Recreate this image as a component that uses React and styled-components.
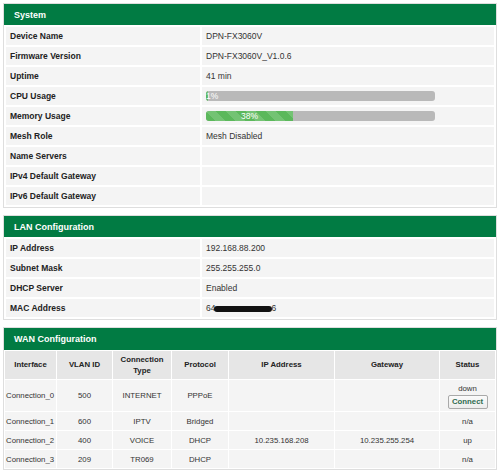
import React from "react";
import styled, { createGlobalStyle } from "styled-components";

const GlobalStyle = createGlobalStyle`
  html, body { margin: 0; padding: 0; background: #fff; }
  body { font-family: "Liberation Sans", Arial, sans-serif; }
`;

const Page = styled.div`
  padding: 3px 3px 0 3px;
  display: flex;
  flex-direction: column;
  gap: 7px;
`;

const Panel = styled.section`
  border: 1px solid #dedede;
  background: #fff;
`;

const Header = styled.div`
  background: #017b43;
  color: #fff;
  font-weight: bold;
  font-size: 9px;
  height: ${(p) => p.$h || 21}px;
  display: flex;
  align-items: center;
  padding-left: 10px;
`;

const InfoTable = styled.table`
  width: 100%;
  border-collapse: separate;
  border-spacing: 2px;
  font-size: 8.5px;
`;

const Label = styled.td`
  width: 186px;
  height: 18px;
  padding: 0 4px;
  background: #f4f4f4;
  font-weight: bold;
  color: #222;
`;

const Value = styled.td`
  height: 18px;
  padding: 0 4px;
  background: #f4f4f4;
  color: #333;
`;

const Bar = styled.div`
  position: relative;
  width: 229px;
  height: 10px;
  border-radius: 3px;
  background: #b9b9b9;
  overflow: hidden;
  display: flex;
`;

const Fill = styled.div`
  height: 100%;
  background-color: #5cb85c;
  background-image: linear-gradient(
    45deg,
    rgba(255, 255, 255, 0.15) 25%,
    transparent 25%,
    transparent 50%,
    rgba(255, 255, 255, 0.15) 50%,
    rgba(255, 255, 255, 0.15) 75%,
    transparent 75%,
    transparent
  );
  background-size: 20px 20px;
  color: #fff;
  font-size: 8.5px;
  line-height: 10px;
  text-align: center;
  white-space: nowrap;
  overflow: visible;
`;

const WanTable = styled.table`
  width: 100%;
  border-collapse: separate;
  border-spacing: 1px;
  font-size: 7.8px;
  color: #333;
`;

const Th = styled.th`
  background: #e6e6e6;
  font-weight: bold;
  color: #222;
  height: 28px;
  padding: 0 2px;
  text-align: center;
  line-height: 11.5px;
  width: ${(p) => p.$w}px;
`;

const Td = styled.td`
  background: #f4f4f4;
  height: ${(p) => p.$h || 18}px;
  padding: 0 1px;
  text-align: ${(p) => (p.$left ? "left" : "center")};
  line-height: 11px;
`;

const ConnectButton = styled.button`
  font-family: "Liberation Sans", Arial, sans-serif;
  font-size: 7.8px;
  font-weight: bold;
  color: #2f6b4f;
  background: linear-gradient(#fbfbfb, #ececec);
  border: 1px solid #a9a9a9;
  border-radius: 2px;
  width: 40px;
  height: 14px;
  padding: 0;
  margin-top: 1px;
  display: inline-block;
`;

const Redacted = styled.span`
  display: inline-block;
  width: 58px;
  height: 6px;
  background: #111;
  border-radius: 3px;
  vertical-align: middle;
  margin: 0 -1px 0 -1px;
`;

function ProgressBar({ value, label }) {
  return (
    <Bar>
      <Fill style={{ width: `${value}%` }}>{label}</Fill>
    </Bar>
  );
}

const systemRows = [
  ["Device Name", "DPN-FX3060V"],
  ["Firmware Version", "DPN-FX3060V_V1.0.6"],
  ["Uptime", "41 min"],
  ["CPU Usage", <ProgressBar value={1} label="1%" />],
  ["Memory Usage", <ProgressBar value={38} label="38%" />],
  ["Mesh Role", "Mesh Disabled"],
  ["Name Servers", ""],
  ["IPv4 Default Gateway", ""],
  ["IPv6 Default Gateway", ""],
];

const lanRows = [
  ["IP Address", "192.168.88.200"],
  ["Subnet Mask", "255.255.255.0"],
  ["DHCP Server", "Enabled"],
  [
    "MAC Address",
    <>
      64<Redacted />6
    </>,
  ],
];

const wanRows = [
  ["Connection_0", "500", "INTERNET", "PPPoE", "", "", "down"],
  ["Connection_1", "600", "IPTV", "Bridged", "", "", "n/a"],
  ["Connection_2", "400", "VOICE", "DHCP", "10.235.168.208", "10.235.255.254", "up"],
  ["Connection_3", "209", "TR069", "DHCP", "", "", "n/a"],
];

function InfoPanel({ title, rows }) {
  return (
    <Panel>
      <Header>{title}</Header>
      <InfoTable>
        <tbody>
          {rows.map(([k, v]) => (
            <tr key={k}>
              <Label>{k}</Label>
              <Value>{v}</Value>
            </tr>
          ))}
        </tbody>
      </InfoTable>
    </Panel>
  );
}

export default function App() {
  return (
    <>
      <GlobalStyle />
      <Page>
        <InfoPanel title="System" rows={systemRows} />
        <InfoPanel title="LAN Configuration" rows={lanRows} />
        <Panel>
          <Header $h={22}>WAN Configuration</Header>
          <WanTable>
            <thead>
              <tr>
                <Th $w={47}>Interface</Th>
                <Th $w={51}>VLAN ID</Th>
                <Th $w={54}>
                  Connection
                  <br />
                  Type
                </Th>
                <Th $w={52}>Protocol</Th>
                <Th $w={101}>IP Address</Th>
                <Th $w={100}>Gateway</Th>
                <Th>Status</Th>
              </tr>
            </thead>
            <tbody>
              {wanRows.map((r, i) => (
                <tr key={r[0]}>
                  <Td $left $h={i === 0 ? 31 : i === 2 ? 18 : 17}>{r[0]}</Td>
                  <Td>{r[1]}</Td>
                  <Td>{r[2]}</Td>
                  <Td>{r[3]}</Td>
                  <Td>{r[4]}</Td>
                  <Td>{r[5]}</Td>
                  <Td>
                    {r[6]}
                    {i === 0 && (
                      <>
                        <br />
                        <ConnectButton>Connect</ConnectButton>
                      </>
                    )}
                  </Td>
                </tr>
              ))}
            </tbody>
          </WanTable>
        </Panel>
      </Page>
    </>
  );
}
